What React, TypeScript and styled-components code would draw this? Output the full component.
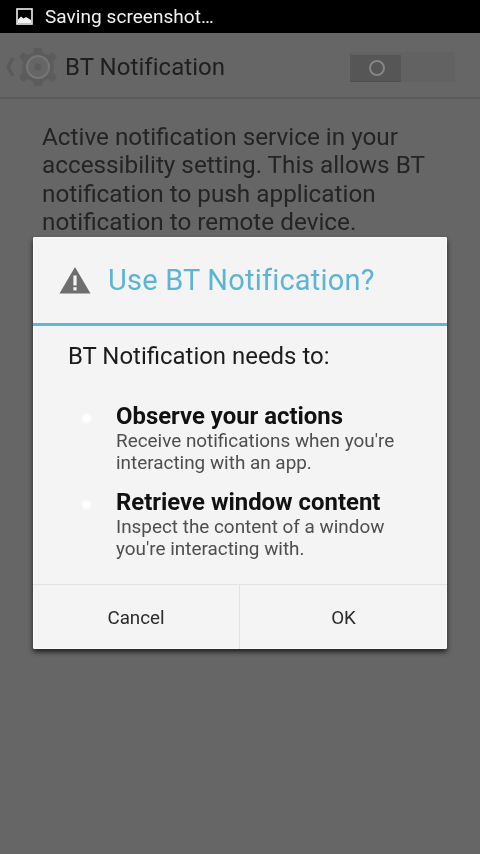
import React from 'react';
import styled, { createGlobalStyle } from 'styled-components';

const GlobalStyle = createGlobalStyle`
  html, body {
    margin: 0;
    padding: 0;
    background: #666666;
    font-family: Roboto, "Liberation Sans", sans-serif;
  }
`;

const Screen = styled.div`
  position: relative;
  width: 480px;
  height: 854px;
  overflow: hidden;
  background: #666666;
  filter: blur(0.35px);
`;

const StatusBar = styled.div`
  display: flex;
  align-items: center;
  gap: 12px;
  height: 33px;
  padding-left: 16px;
  box-sizing: border-box;
  background: #000;
  color: #f2f2f2;
  font-size: 19px;
  letter-spacing: 0.05px;
`;

const ActionBar = styled.div`
  display: flex;
  align-items: center;
  height: 66px;
  box-sizing: border-box;
  padding: 3px 25px 0 6px;
  border-bottom: 2px solid #5a5a5a;
`;

const AppTitle = styled.div`
  margin-left: 5px;
  font-size: 24px;
  letter-spacing: 0.05px;
  color: #1f1f1f;
`;

const Toggle = styled.div`
  display: flex;
  align-items: flex-end;
  width: 105px;
  height: 30px;
  margin-left: auto;
  background: #626262;
`;

const ToggleThumb = styled.div`
  display: flex;
  align-items: center;
  justify-content: center;
  box-sizing: border-box;
  width: 51px;
  height: 27px;
  padding-left: 2px;
  background: #565656;
  border-bottom: 1px solid #4d4d4d;
`;

const ToggleRing = styled.div`
  width: 12px;
  height: 12px;
  border: 2px solid #858585;
  border-radius: 50%;
`;

const Intro = styled.p`
  margin: 24px 30px 0 42px;
  font-size: 24.3px;
  line-height: 28.4px;
  color: #242424;
`;

const Dialog = styled.div`
  position: absolute;
  left: 33px;
  top: 237px;
  display: flex;
  flex-direction: column;
  width: 414px;
  height: 412px;
  background: #f4f4f4;
  border-radius: 2px;
  box-shadow: inset 0 0 0 1px #fbfbfb, 0 3px 5px rgba(0, 0, 0, 0.7);
`;

const DialogHeader = styled.div`
  display: flex;
  align-items: center;
  gap: 17px;
  height: 89px;
  box-sizing: border-box;
  padding: 0 0 0 26px;
  border-bottom: 3px solid #5cb8d8;
`;

const DialogTitle = styled.div`
  font-size: 29px;
  color: #5cb5d6;
  letter-spacing: 0.2px;
`;

const DialogBody = styled.div`
  flex: 1;
  padding: 16px 0 0 35px;
`;

const Needs = styled.div`
  font-size: 23.95px;
  line-height: 28px;
  color: #1c1c1c;
`;

const PermissionList = styled.div`
  display: flex;
  flex-direction: column;
  gap: 16px;
  margin-top: 33px;
`;

const Permission = styled.div`
  position: relative;
  padding-left: 48px;
`;

const Bullet = styled.span`
  position: absolute;
  left: 14px;
  top: 11px;
  width: 9px;
  height: 9px;
  border-radius: 50%;
  background: #ffffff;
  filter: blur(1px);
`;

const PermissionName = styled.div`
  font-size: 23.9px;
  font-weight: 700;
  line-height: 27px;
  color: #111111;
`;

const PermissionText = styled.div`
  font-size: 18.9px;
  line-height: 21.5px;
  color: #4e4e4e;
`;

const ButtonBar = styled.div`
  display: flex;
  height: 64px;
  border-top: 1px solid #e2e2e2;
`;

const DialogButton = styled.div<{ $width: number }>`
  display: flex;
  align-items: center;
  justify-content: center;
  box-sizing: border-box;
  width: ${(p) => p.$width}px;
  padding-top: 1px;
  font-size: 18.8px;
  color: #2b2b2b;
  & + & {
    border-left: 1px solid #e2e2e2;
  }
`;

const ScreenshotIcon = () => (
  <svg width="17" height="17" viewBox="0 0 17 17">
    <rect x="1" y="1" width="15" height="15" fill="#000" stroke="#f2f2f2" strokeWidth="1.6" />
    <path d="M2 15V11.5L5 8.5L7.5 10.5L10 9L15 12V15Z" fill="#f2f2f2" />
  </svg>
);

const AppIcon = () => (
  <svg width="54" height="44" viewBox="0 0 54 44">
    <path d="M7 13L2 22L7 31" fill="none" stroke="#5a5a5a" strokeWidth="3.5" />
    <g transform="translate(32 22)">
      <path
        d="M-4-19H4L5-14L10-12L15-15L19-10L15-5L16 0L15 5L19 10L15 15L10 12L5 14L4 19H-4L-5 14L-10 12L-15 15L-19 10L-15 5L-16 0L-15-5L-19-10L-15-15L-10-12L-5-14Z"
        fill="#5c5c5c"
      />
      <circle r="11" fill="#666" stroke="#767676" strokeWidth="2" />
      <circle r="3.5" fill="#5c5c5c" />
    </g>
  </svg>
);

const WarningIcon = () => (
  <svg width="32" height="28" viewBox="0 0 32 28">
    <path d="M16 1L31.5 27.5H0.5Z" fill="#6e6e6e" />
    <rect x="14.4" y="9.5" width="3.2" height="10" fill="#f4f4f4" />
    <rect x="14.4" y="21.2" width="3.2" height="3.2" fill="#f4f4f4" />
  </svg>
);

export default function App() {
  return (
    <Screen>
      <GlobalStyle />
      <StatusBar>
        <ScreenshotIcon />
        <span>Saving screenshot…</span>
      </StatusBar>
      <ActionBar>
        <AppIcon />
        <AppTitle>BT Notification</AppTitle>
        <Toggle>
          <ToggleThumb>
            <ToggleRing />
          </ToggleThumb>
        </Toggle>
      </ActionBar>
      <Intro>
        Active notification service in your accessibility setting. This allows BT notification
        to push application notification to remote device.
      </Intro>
      <Dialog>
        <DialogHeader>
          <WarningIcon />
          <DialogTitle>Use BT Notification?</DialogTitle>
        </DialogHeader>
        <DialogBody>
          <Needs>BT Notification needs to:</Needs>
          <PermissionList>
            <Permission>
              <Bullet />
              <PermissionName>Observe your actions</PermissionName>
              <PermissionText>
                Receive notifications when you're
                <br />
                interacting with an app.
              </PermissionText>
            </Permission>
            <Permission>
              <Bullet />
              <PermissionName>Retrieve window content</PermissionName>
              <PermissionText>
                Inspect the content of a window
                <br />
                you're interacting with.
              </PermissionText>
            </Permission>
          </PermissionList>
        </DialogBody>
        <ButtonBar>
          <DialogButton $width={206}>Cancel</DialogButton>
          <DialogButton $width={208}>OK</DialogButton>
        </ButtonBar>
      </Dialog>
    </Screen>
  );
}
